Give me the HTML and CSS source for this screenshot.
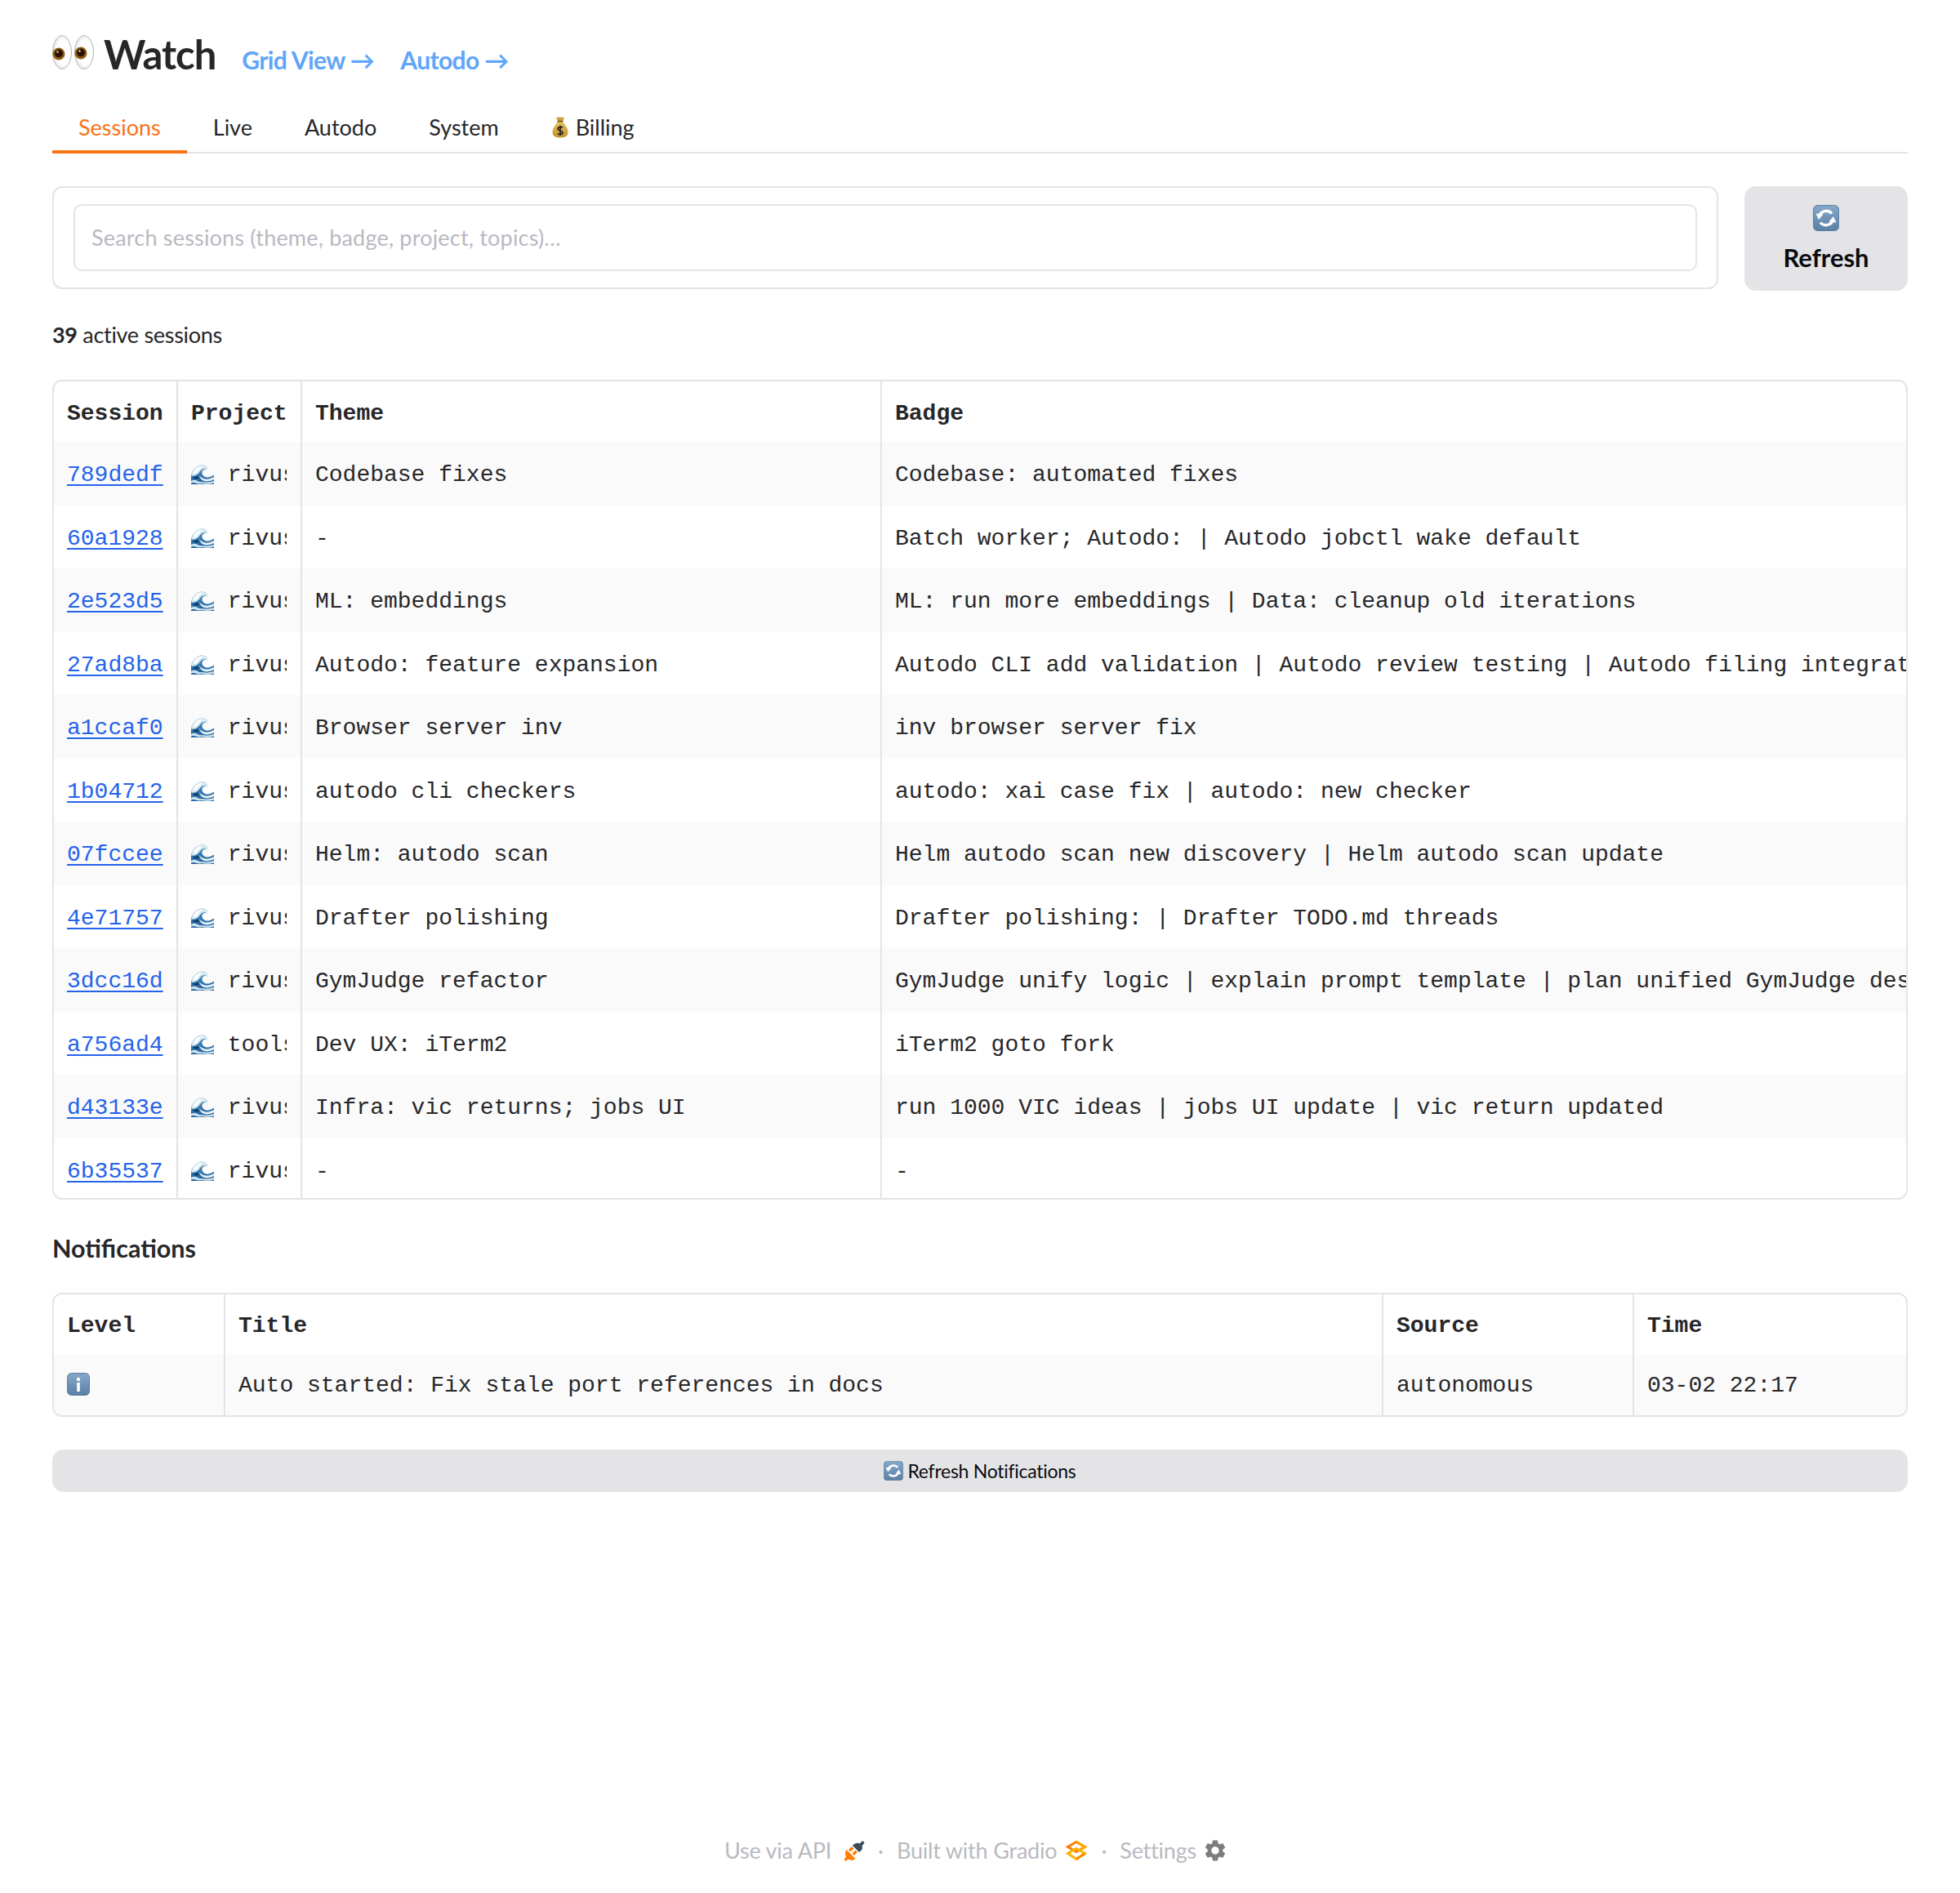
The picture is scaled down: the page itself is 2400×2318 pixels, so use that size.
FILE: index.html
```html
<!DOCTYPE html>
<html lang="en">
<head>
<meta charset="utf-8">
<title>Watch</title>
<link rel="stylesheet" href="styles.css">
</head>
<body>
<svg class="sprite" aria-hidden="true">
  <defs>
    <linearGradient id="tile" x1="0" y1="0" x2="0" y2="1"><stop offset="0" stop-color="#86a9cb"/><stop offset="1" stop-color="#5a7fa5"/></linearGradient>
    <linearGradient id="gold" x1="0" y1="0" x2="0" y2="1"><stop offset="0" stop-color="#e5c25e"/><stop offset="1" stop-color="#c2912f"/></linearGradient>
    <linearGradient id="sea" x1="0" y1="0" x2="0" y2="1"><stop offset="0" stop-color="#4f93c4"/><stop offset="1" stop-color="#1f5f9e"/></linearGradient>
    <radialGradient id="sclera" cx=".55" cy=".5" r=".6"><stop offset=".6" stop-color="#fff"/><stop offset="1" stop-color="#d8d8d8"/></radialGradient>
    <symbol id="i-refresh" viewBox="0 0 32 32">
      <rect x=".5" y=".5" width="31" height="31" rx="5" fill="url(#tile)" stroke="#5f7f9f"/>
      <path d="M7.500 14A9 9 0 0 1 23 10.500" fill="none" stroke="#fff" stroke-width="3.400"/>
      <path d="M24.500 18A9 9 0 0 1 9 21.500" fill="none" stroke="#fff" stroke-width="3.400"/>
      <path d="M3.500 10.500L12.500 11.500L7 18Z" fill="#fff"/>
      <path d="M28.500 21.500L19.500 20.500L25 14Z" fill="#fff"/>
    </symbol>
    <symbol id="i-info" viewBox="0 0 28 28">
      <rect x=".5" y=".5" width="27" height="27" rx="5" fill="url(#tile)" stroke="#5f7f9f"/>
      <circle cx="14" cy="8" r="2.200" fill="#fff"/>
      <rect x="12.200" y="12" width="3.600" height="11" fill="#fff"/>
    </symbol>
    <symbol id="i-wave" viewBox="0 0 28 24">
      <path d="M0 24V12C3 5 8 0 14 .6C18 1 20 3 20 6.500C16 5 13 7 13.500 10.500C14 14 17 15.500 20 15.500C23 15.500 26 14 28 12.500V24Z" fill="url(#sea)"/>
      <path d="M0 13C1.500 6 8 -.5 14.500 .4C18.500 1 20.500 3.500 20 7C17.500 4.500 14 5 12 7C10 9.500 8.500 12 5.500 13C3 14 1 14 0 13Z" fill="#d6e9ef"/>
      <path d="M3 10C5 5 9.500 1.800 14.500 1.800C12.500 3.500 9.500 5.500 8 8.500C6.500 11 4 12 3 10Z" fill="#fff"/>
      <path d="M10 13C12 16 16 18 20 17.600C23 17.400 26 16 28 15V18C24 20 20 21 16 20C13 19.200 10.500 16.500 10 13Z" fill="#e4f0f4"/>
      <path d="M0 20C3 18 5.500 18.500 8 20C11 21.800 14 21 17 21.500C20 22 24 21 28 20V22.500C24 24 19 24 16 23.500C12 23 10 24 7 23C4.500 22 2 21.500 0 22.500Z" fill="#cfe3ec"/>
      <path d="M2 15.500L8.500 14L9.500 17L4.500 17.500Z" fill="#123c66"/>
    </symbol>
    <symbol id="i-bag" viewBox="0 0 20 27">
      <path d="M5 1.500C7 2.500 8.500 1 10 1.500C11.500 1 13 2.500 15 1.500L13 7H7Z" fill="#c9a243"/>
      <path d="M7 7H13C16 11 19.500 15 19.500 20C19.500 25 15 26.500 10 26.500C5 26.500 .5 25 .5 20C.5 15 4 11 7 7Z" fill="url(#gold)"/>
      <rect x="6.500" y="5.800" width="7" height="1.800" rx=".8" fill="#7c5b1e"/>
      <path d="M13 14.500C12 13 7 13 7 15.800C7 18.500 13 17.500 13 20.500C13 23 8 23 7 21.500M10 11.800V24" fill="none" stroke="#2e2a25" stroke-width="1.800"/>
    </symbol>
    <symbol id="i-eyes" viewBox="0 0 53 42">
      <ellipse cx="12" cy="21" rx="11.500" ry="20.500" fill="url(#sclera)" stroke="#b8b8b8"/>
      <ellipse cx="39" cy="21" rx="11.500" ry="20.500" fill="url(#sclera)" stroke="#b8b8b8"/>
      <circle cx="8" cy="23" r="7.500" fill="#8f5f10"/><circle cx="8" cy="22.500" r="5" fill="#2b1203"/><circle cx="6.500" cy="20.500" r="1.200" fill="#e8d8c0"/>
      <circle cx="35" cy="22" r="7.500" fill="#8f5f10"/><circle cx="35" cy="21.500" r="5" fill="#2b1203"/><circle cx="33.500" cy="19.500" r="1.200" fill="#e8d8c0"/>
    </symbol>
    <symbol id="i-plug" viewBox="0 0 26 26">
      <path d="M11 7L19 15C22 13.500 24 10 22.500 7.500L25.500 3.500L23.500 1L19.500 4.500C17 3 13.500 4 11 7Z" fill="#3f4a5c"/>
      <path d="M3.500 12L14.500 23C12 25.500 8.500 25.500 6 23.500L2.500 26L.5 24L3.200 20.500C1.500 18 1.500 14.500 3.500 12Z" fill="#ff7c00"/>
      <path d="M6 12L10 8L12.500 10.500L8.500 14.500ZM10.500 16.500L14.500 12.500L17 15L13 19Z" fill="#ff7c00"/>
    </symbol>
    <symbol id="i-gradio" viewBox="0 0 28 26">
      <path d="M3.500 8.500L14 2.500L24.500 8.500L14 14.500Z" fill="none" stroke="#ff7c00" stroke-width="3"/>
      <path d="M14 2.500L24.500 8.500L19 11.700" fill="none" stroke="#ffa500" stroke-width="3"/>
      <path d="M3.500 16.500L14 10.500L24.500 16.500L14 23.500Z" fill="none" stroke="#ffb300" stroke-width="3"/>
      <path d="M24.500 16.500L14 23.500" fill="none" stroke="#ff8a00" stroke-width="3"/>
    </symbol>
    <symbol id="i-gear" viewBox="2 2 20 20">
      <path d="M19.140 12.940c.04-.3.06-.61.06-.94 0-.32-.02-.64-.07-.94l2.030-1.580c.18-.14.23-.41.12-.61l-1.920-3.320c-.12-.22-.37-.29-.59-.22l-2.390.96c-.5-.38-1.030-.7-1.620-.94l-.36-2.540c-.04-.24-.24-.41-.48-.41h-3.840c-.24 0-.43.17-.47.41l-.36 2.540c-.59.24-1.130.57-1.620.94l-2.390-.96c-.22-.08-.47 0-.59.22L2.740 8.870c-.12.21-.08.47.12.61l2.030 1.580c-.05.3-.09.63-.09.94s.02.64.07.94l-2.030 1.580c-.18.14-.23.41-.12.61l1.920 3.320c.12.22.37.29.59.22l2.390-.96c.5.38 1.030.7 1.620.94l.36 2.540c.05.24.24.41.48.41h3.840c.24 0 .44-.17.47-.41l.36-2.540c.59-.24 1.130-.56 1.620-.94l2.390.96c.22.08.47 0 .59-.22l1.920-3.320c.12-.22.07-.47-.12-.61l-2.010-1.580zM12 15.600c-1.980 0-3.600-1.620-3.600-3.600s1.620-3.600 3.600-3.600 3.600 1.620 3.600 3.600-1.620 3.600-3.600 3.600z" fill="#7d7d7d"/>
    </symbol>
  </defs>
</svg>

<header class="title-row">
  <h1 class="title"><svg class="ic-eyes"><use href="#i-eyes"/></svg><span>Watch</span></h1>
  <a class="nav-link" href="#">Grid View →</a>
  <a class="nav-link" href="#">Autodo →</a>
</header>

<nav class="tabs">
  <a class="tab tab-active" href="#">Sessions</a>
  <a class="tab" href="#">Live</a>
  <a class="tab" href="#">Autodo</a>
  <a class="tab" href="#">System</a>
  <a class="tab" href="#"><svg class="ic-bag"><use href="#i-bag"/></svg>Billing</a>
</nav>

<section class="search-row">
  <div class="search-panel">
    <input class="search-input" type="text" placeholder="Search sessions (theme, badge, project, topics)…">
  </div>
  <button class="refresh-btn"><svg class="ic-refresh"><use href="#i-refresh"/></svg><span>Refresh</span></button>
</section>

<p class="count"><strong>39</strong> active sessions</p>

<div class="table-wrap">
  <table class="grid sessions">
    <colgroup><col class="c-session"><col class="c-project"><col class="c-theme"><col></colgroup>
    <thead><tr><th>Session</th><th>Project</th><th>Theme</th><th>Badge</th></tr></thead>
    <tbody>
      <tr><td><a href="#">789dedf</a></td><td><div class="proj"><svg class="ic-wave"><use href="#i-wave"/></svg> rivus</div></td><td>Codebase fixes</td><td>Codebase: automated fixes</td></tr>
      <tr><td><a href="#">60a1928</a></td><td><div class="proj"><svg class="ic-wave"><use href="#i-wave"/></svg> rivus</div></td><td>-</td><td>Batch worker; Autodo: | Autodo jobctl wake default</td></tr>
      <tr><td><a href="#">2e523d5</a></td><td><div class="proj"><svg class="ic-wave"><use href="#i-wave"/></svg> rivus</div></td><td>ML: embeddings</td><td>ML: run more embeddings | Data: cleanup old iterations</td></tr>
      <tr><td><a href="#">27ad8ba</a></td><td><div class="proj"><svg class="ic-wave"><use href="#i-wave"/></svg> rivus</div></td><td>Autodo: feature expansion</td><td>Autodo CLI add validation | Autodo review testing | Autodo filing integration</td></tr>
      <tr><td><a href="#">a1ccaf0</a></td><td><div class="proj"><svg class="ic-wave"><use href="#i-wave"/></svg> rivus</div></td><td>Browser server inv</td><td>inv browser server fix</td></tr>
      <tr><td><a href="#">1b04712</a></td><td><div class="proj"><svg class="ic-wave"><use href="#i-wave"/></svg> rivus</div></td><td>autodo cli checkers</td><td>autodo: xai case fix | autodo: new checker</td></tr>
      <tr><td><a href="#">07fccee</a></td><td><div class="proj"><svg class="ic-wave"><use href="#i-wave"/></svg> rivus</div></td><td>Helm: autodo scan</td><td>Helm autodo scan new discovery | Helm autodo scan update</td></tr>
      <tr><td><a href="#">4e71757</a></td><td><div class="proj"><svg class="ic-wave"><use href="#i-wave"/></svg> rivus</div></td><td>Drafter polishing</td><td>Drafter polishing: | Drafter TODO.md threads</td></tr>
      <tr><td><a href="#">3dcc16d</a></td><td><div class="proj"><svg class="ic-wave"><use href="#i-wave"/></svg> rivus</div></td><td>GymJudge refactor</td><td>GymJudge unify logic | explain prompt template | plan unified GymJudge design</td></tr>
      <tr><td><a href="#">a756ad4</a></td><td><div class="proj"><svg class="ic-wave"><use href="#i-wave"/></svg> tools</div></td><td>Dev UX: iTerm2</td><td>iTerm2 goto fork</td></tr>
      <tr><td><a href="#">d43133e</a></td><td><div class="proj"><svg class="ic-wave"><use href="#i-wave"/></svg> rivus</div></td><td>Infra: vic returns; jobs UI</td><td>run 1000 VIC ideas | jobs UI update | vic return updated</td></tr>
      <tr><td><a href="#">6b35537</a></td><td><div class="proj"><svg class="ic-wave"><use href="#i-wave"/></svg> rivus</div></td><td>-</td><td>-</td></tr>
    </tbody>
  </table>
</div>

<h2 class="section-title">Notifications</h2>

<div class="table-wrap">
  <table class="grid notes">
    <colgroup><col class="c-level"><col class="c-title"><col class="c-source"><col></colgroup>
    <thead><tr><th>Level</th><th>Title</th><th>Source</th><th>Time</th></tr></thead>
    <tbody>
      <tr><td><svg class="ic-info"><use href="#i-info"/></svg></td><td>Auto started: Fix stale port references in docs</td><td>autonomous</td><td>03-02 22:17</td></tr>
    </tbody>
  </table>
</div>

<button class="notify-btn"><svg class="ic-refresh-sm"><use href="#i-refresh"/></svg><span>Refresh Notifications</span></button>

<footer class="footer">
  <a class="foot-item" href="#">Use via API<svg class="ic-plug"><use href="#i-plug"/></svg></a>
  <span class="foot-dot">·</span>
  <a class="foot-item" href="#">Built with Gradio<svg class="ic-gradio"><use href="#i-gradio"/></svg></a>
  <span class="foot-dot">·</span>
  <a class="foot-item" href="#">Settings<svg class="ic-gear"><use href="#i-gear"/></svg></a>
</footer>
</body>
</html>
```

FILE: styles.css
```css
* { box-sizing: border-box; }
html, body { margin: 0; background: #fff; }
body {
  padding: 0 64px;
  font-family: "Lato", "Noto Sans", sans-serif;
  color: #27272a;
}
a { text-decoration: none; color: inherit; }
.sprite { display: block; width: 0; height: 0; }

.title-row { display: flex; align-items: center; height: 64px; margin-top: 34px; }
.title { display: flex; align-items: center; margin: 0; font-size: 49px; font-weight: 700; line-height: 64px; letter-spacing: -1px; }
.ic-eyes { width: 53px; height: 42px; margin-right: 10px; margin-top: -4px; }
.nav-link { color: #60a5fa; font-size: 30px; font-weight: 700; margin-left: 32px; padding-top: 14px; letter-spacing: -.6px; }

.tabs { display: flex; height: 62px; margin-top: 28px; border-bottom: 2px solid #e4e4e7; }
.tab { display: flex; align-items: center; padding: 0 32px; font-size: 27px; margin-bottom: -2px; border-bottom: 4px solid transparent; color: #27272a; }
.tab-active { color: #f97316; border-bottom-color: #f97316; }
.ic-bag { width: 20px; height: 27px; margin-right: 9px; margin-left: 1px; }

.search-row { display: flex; gap: 32px; margin-top: 40px; }
.search-panel { flex: 1; height: 126px; padding: 20px 24px; border: 2px solid #e4e4e7; border-radius: 12px; }
.search-input { display: block; width: 100%; height: 82px; padding: 0 20px 2px; border: 2px solid #e4e4e7; border-radius: 10px; font: 27px "Lato", sans-serif; letter-spacing: .2px; color: #27272a; background: #fff; }
.search-input::placeholder { color: #b9b9c1; opacity: 1; }
.refresh-btn { display: flex; flex-direction: column; align-items: center; width: 200px; height: 128px; padding: 23px 0 0; border: 0; border-radius: 14px; background: #e4e4e7; font-family: inherit; color: #0b0b0f; font-size: 31px; font-weight: 700; }
.ic-refresh { width: 32px; height: 32px; margin-bottom: 13px; }

.count { margin: 34px 0 0; height: 40px; font-size: 27px; line-height: 40px; letter-spacing: -.3px; }
.count strong { font-weight: 700; }

.table-wrap { border: 2px solid #e4e4e7; border-radius: 12px; overflow: hidden; margin-top: 35px; }
.grid { width: 100%; table-layout: fixed; border-collapse: collapse; font-family: "Liberation Mono", monospace; font-size: 28px; line-height: 40px; }
.c-session { width: 151px; }
.c-project { width: 152px; }
.c-theme { width: 710px; }
.c-level { width: 209px; }
.c-title { width: 1418px; }
.c-source { width: 307px; }
.grid th, .grid td { padding: 0 17px 0 16px; white-space: nowrap; overflow: hidden; text-align: left; border-left: 2px solid #e4e4e7; }
.grid th:first-child, .grid td:first-child { border-left: 0; }
.grid th:last-child, .grid td:last-child { padding-right: 0; }
.grid th { height: 74px; font-weight: 700; padding-top: 5px; }
.grid td { height: 77.5px; padding-top: 5px; padding-bottom: 0; }
.grid tbody tr:nth-child(odd) td { background: #fafafa; }
.sessions tbody tr:last-child td { height: 73px; padding-top: 10px; }
.notes tbody tr:last-child td { height: 74px; padding-top: 3px; }
.grid a { color: #2563eb; text-decoration: underline; text-underline-offset: 4px; }
.proj { overflow: hidden; white-space: pre; }
.ic-wave { width: 28px; height: 24px; vertical-align: -4px; }
.ic-info { display: block; width: 28px; height: 28px; margin-bottom: 4px; }

.section-title { margin: 39px 0 0; height: 40px; font-size: 30.5px; font-weight: 700; line-height: 40px; }
.section-title + .table-wrap { margin-top: 35px; }

.notify-btn { display: flex; align-items: center; justify-content: center; width: 100%; height: 52px; margin-top: 40px; border: 0; border-radius: 14px; background: #e4e4e7; color: #0b0b0f; font-family: inherit; font-size: 23px; letter-spacing: -.27px; }
.ic-refresh-sm { width: 24px; height: 24px; margin-right: 5px; }

.footer { display: flex; justify-content: center; align-items: center; height: 40px; margin-top: 419px; padding-right: 12px; color: #b9b9c1; font-size: 27px; letter-spacing: -.2px; }
.foot-item { display: flex; align-items: center; }
.foot-dot { margin: 0 16px; font-size: 27px; }
.ic-plug { width: 26px; height: 26px; margin-left: 15px; }
.ic-gradio { width: 28px; height: 26px; margin-left: 10px; }
.ic-gear { width: 26px; height: 26px; margin-left: 10px; }
```
